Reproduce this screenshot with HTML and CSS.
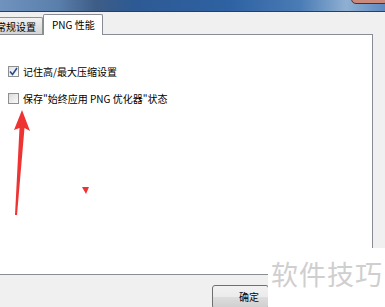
FILE: index.html
```html
<!DOCTYPE html>
<html lang="zh-CN">
<head>
    <meta charset="UTF-8">
    <title>PNG 性能</title>
    <link rel="stylesheet" href="styles.css">
</head>
<body>
    <div class="titlebar">
        <div class="close"></div>
    </div>
    <div class="tabs">
        <div class="tab">常规设置</div>
        <div class="tab active">PNG 性能</div>
    </div>
    <div class="panel">
        <label class="option">
            <span class="box checked"><svg width="9" height="9" viewBox="0 0 9 9"><path d="M1 4.5 L3.5 7.5 L8 1" fill="none" stroke="#2c4a8a" stroke-width="1.6"/></svg></span>
            记住高/最大压缩设置
        </label>
        <label class="option">
            <span class="box"></span>
            保存"始终应用 PNG 优化器"状态
        </label>
    </div>
    <div class="footer">
        <button class="btn">确定</button>
    </div>

    <!-- annotation drawn over the screenshot -->
    <svg class="marks" width="385" height="307" viewBox="0 0 385 307">
        <path d="M15 215 L19.5 128 L14 130 L22 110 L30 131 L24.5 128 L17 215 Z" fill="#ee3333"/>
        <path d="M82 187 L89 187 L86 194 Z" fill="#ee3333"/>
    </svg>
    <div class="watermark">软件技巧</div>
</body>
</html>
```
FILE: styles.css
```css
body {
    margin: 0;
    width: 385px;
    height: 307px;
    overflow: hidden;
    background: #f0f0f0;
    font-family: "Noto Sans CJK SC", "DejaVu Sans", sans-serif;
    font-size: 10px;
    color: #000;
    position: relative;
}
.titlebar {
    height: 11px;
    border-bottom: 1px solid #23406a;
    background: linear-gradient(90deg, #6f93bd 0%, #5a7fab 15%, #3d5d86 25%, #2d5a94 35%, #2e62a2 60%, #4a7cb5 78%, #8fb0d2 90%, #5d8ac0 100%);
    position: relative;
}
.close {
    position: absolute;
    right: -4px;
    top: -6px;
    width: 36px;
    height: 8px;
    border: 1px solid #5a2a26;
    border-radius: 0 0 5px 5px;
    background: #c98a7c;
}
.tabs {
    display: flex;
    align-items: flex-end;
    height: 20px;
    margin-top: 2px;
    position: relative;
    z-index: 1;
}
.tab {
    height: 16px;
    line-height: 17px;
    padding: 0 6px 0 0;
    margin-left: -5px;
    border: 1px solid #8e8f8f;
    border-bottom: none;
    border-radius: 2px 2px 0 0;
    background: linear-gradient(#f2f2f2, #e2e2e2 50%, #d4d4d4);
    white-space: nowrap;
}
.tab.active {
    margin-left: 0;
    height: 20px;
    line-height: 19px;
    padding: 0 7px 0 8px;
    background: #fff;
    border-color: #898c95;
    margin-bottom: -1px;
}
.panel {
    height: 238px;
    box-sizing: border-box;
    height: 241px;
    margin-left: -1px;
    margin-right: 12px;
    border: 1px solid #898c95;
    background: #fff;
    padding-top: 31px;
    display: flex;
    flex-direction: column;
    gap: 16px;
}
.option {
    display: flex;
    align-items: center;
    gap: 4px;
    padding-left: 8px;
    height: 11px;
    white-space: nowrap;
}
.box {
    width: 11px;
    height: 11px;
    box-sizing: border-box;
    border: 1px solid #8e8f8f;
    background: linear-gradient(135deg, #dcdcdc, #fafafa);
    display: flex;
    align-items: center;
    justify-content: center;
}
.box.checked {
    background: linear-gradient(135deg, #e0e4ea, #fcfcfc);
}
.footer {
    display: flex;
    padding: 10px 0 0 212px;
}
.btn {
    width: 57px;
    height: 24px;
    border: 1px solid #707070;
    border-radius: 3px;
    background: linear-gradient(#f2f2f2, #ebebeb 50%, #dddddd 51%, #cfcfcf);
    font-family: "Noto Sans CJK SC", sans-serif;
    font-size: 10px;
    text-align: right;
    padding: 0 9px 2px 0;
}
.marks {
    position: absolute;
    left: 0;
    top: 0;
    pointer-events: none;
}
.watermark {
    position: absolute;
    left: 268px;
    top: 248px;
    width: 117px;
    height: 59px;
    background: #fff;
    color: #cfcfcf;
    font-size: 27px;
    line-height: 1;
    padding: 12px 0 0 3px;
    box-sizing: border-box;
    letter-spacing: 1px;
}
```
